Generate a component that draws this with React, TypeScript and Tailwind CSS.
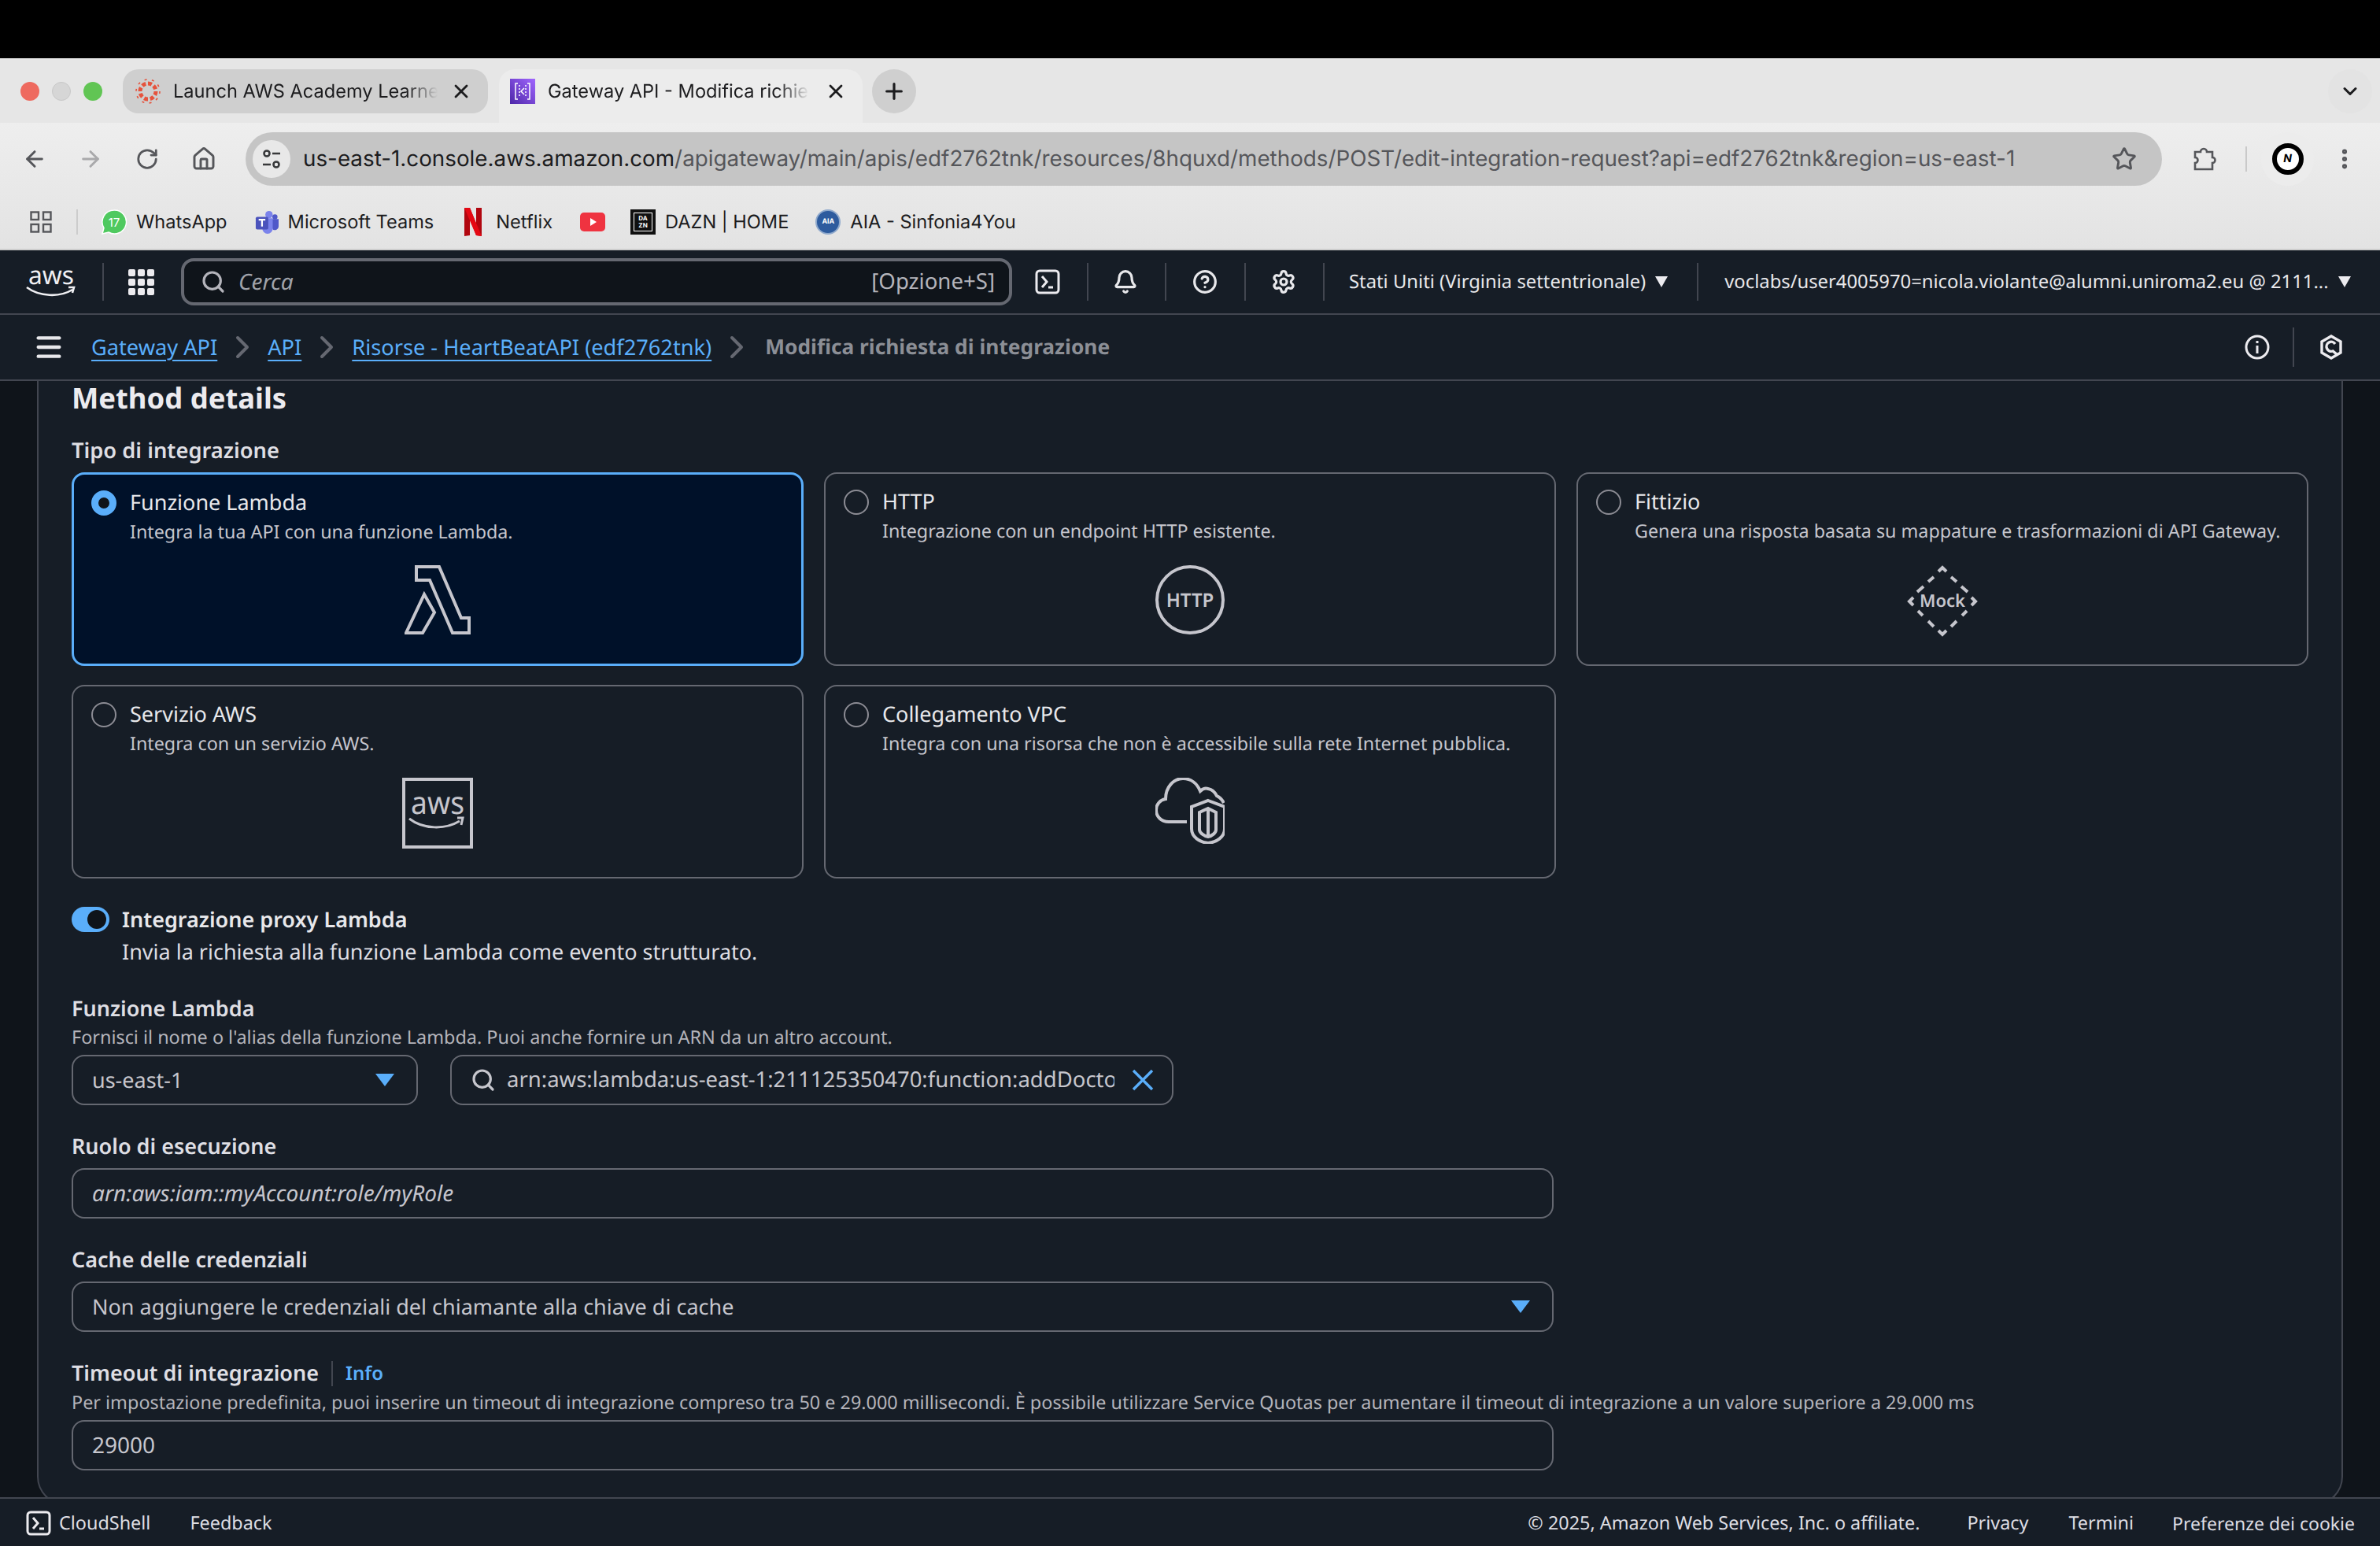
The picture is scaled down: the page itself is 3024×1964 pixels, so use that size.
import type { ReactNode } from "react";
import {
  ArrowLeft,
  ArrowRight,
  Bell,
  ChevronDown,
  ChevronRight,
  CircleHelp,
  EllipsisVertical,
  House,
  Menu,
  Plus,
  RotateCw,
  Search,
  Settings,
  Star,
  X,
} from "lucide-react";

function CanvasIcon() {
  return (
    <svg viewBox="0 0 32 32" className="w-8 h-8 shrink-0">
      <circle cx="16" cy="16" r="10" fill="none" stroke="#e5533d" strokeWidth="5" strokeDasharray="5 2.8" />
      <circle cx="16" cy="16" r="15" fill="none" stroke="#e5533d" strokeWidth="1.6" strokeDasharray="3 6.4" />
    </svg>
  );
}

function GatewayIcon() {
  return (
    <svg viewBox="0 0 32 32" className="w-8 h-8 shrink-0">
      <defs>
        <linearGradient id="gw" x1="0" y1="1" x2="1" y2="0">
          <stop offset="0" stopColor="#4d27a8" />
          <stop offset="1" stopColor="#a166ff" />
        </linearGradient>
      </defs>
      <rect width="32" height="32" fill="url(#gw)" />
      <path d="M10 6H7v20h3M22 6h3v20h-3M18 12l-4 4 4 4" fill="none" stroke="#fff" strokeWidth="1.5" />
      <path d="M12 8v16M20 8v16" stroke="#fff" strokeWidth="1.5" strokeDasharray="2 2" />
    </svg>
  );
}

function Bookmark({ icon, label }: { icon: ReactNode; label?: string }) {
  return (
    <div className="flex items-center gap-[12px] shrink-0">
      {icon}
      {label && <span className="text-[23.6px] text-[#1c1c1e]">{label}</span>}
    </div>
  );
}

function BrowserChrome() {
  return (
    <div className="shrink-0 [font-family:Inter,sans-serif]">
      {/* Tab strip */}
      <div className="h-[82px] bg-[#e6e6e6] flex items-start pt-[14px] pl-[26px] pr-[10px]">
        <div className="flex items-center gap-[16px] h-[56px] w-[130px] shrink-0">
          <div className="w-6 h-6 rounded-full bg-[#ee6a5f]" />
          <div className="w-6 h-6 rounded-full bg-[#d6d6d6] border border-[#c8c8c8]" />
          <div className="w-6 h-6 rounded-full bg-[#61c554]" />
        </div>
        <div className="h-[56px] w-[464px] rounded-[20px] bg-[#cfcfcf] flex items-center pl-4 pr-5 gap-4 shrink-0">
          <CanvasIcon />
          <span className="w-[336px] overflow-hidden whitespace-nowrap text-[23.6px] text-[#1c1c1e] [mask-image:linear-gradient(to_right,black_88%,transparent)]">
            Launch AWS Academy Learner Lab
          </span>
          <X className="w-[28px] h-[28px] text-[#1c1c1e] ml-auto" strokeWidth={2.4} />
        </div>
        <div className="h-[68px] w-[462px] ml-[14px] rounded-t-[20px] bg-[#ececec] flex items-center pl-[14px] pr-5 pb-3 gap-4 shrink-0">
          <GatewayIcon />
          <span className="w-[332px] overflow-hidden whitespace-nowrap text-[23.6px] text-[#1c1c1e] [mask-image:linear-gradient(to_right,black_88%,transparent)]">
            Gateway API - Modifica richiesta
          </span>
          <X className="w-[28px] h-[28px] text-[#1c1c1e] ml-auto" strokeWidth={2.4} />
        </div>
        <div className="w-14 h-14 ml-3 rounded-full bg-[#cfcfcf] flex items-center justify-center shrink-0">
          <Plus className="w-8 h-8 text-[#1c1c1e]" strokeWidth={2.4} />
        </div>
        <div className="w-14 h-14 ml-auto rounded-full bg-[#e3e3e3] flex items-center justify-center">
          <ChevronDown className="w-7 h-7 text-[#1c1c1e]" strokeWidth={2.6} />
        </div>
      </div>

      <div className="bg-gradient-to-b from-[#eeeeee] to-[#e3e3e3] border-b-2 border-[#cdcdcd]">
        {/* Toolbar */}
        <div className="h-[80px] pt-3 flex items-start">
          <div className="flex items-center h-[68px] pl-[28px] w-[312px] shrink-0">
            <ArrowLeft className="w-8 h-8 text-[#55565a]" strokeWidth={2.2} />
            <ArrowRight className="w-8 h-8 ml-[39px] text-[#a9a9ab]" strokeWidth={2.2} />
            <RotateCw className="w-[30px] h-[30px] ml-[41px] text-[#55565a]" strokeWidth={2.2} />
            <House className="w-8 h-8 ml-[41px] text-[#55565a]" strokeWidth={2.2} />
          </div>
          <div className="h-[68px] w-[2435px] rounded-full bg-[#c5c5c5] flex items-center pl-[9px] pr-[32px] shrink-0">
            <div className="w-[48px] h-[48px] rounded-full bg-[#e8e8e8] flex items-center justify-center shrink-0">
              <svg viewBox="0 0 28 28" className="w-7 h-7 text-[#38393b]" fill="none" stroke="currentColor" strokeWidth="2.6">
                <circle cx="8" cy="7" r="3.5" />
                <path d="M15 7h10M3 21h10" />
                <circle cx="20" cy="21" r="3.5" />
              </svg>
            </div>
            <div className="ml-4 text-[27.8px] whitespace-nowrap text-[#55565a]">
              <span className="text-[#1c1c1e]">us-east-1.console.aws.amazon.com</span>
              /apigateway/main/apis/edf2762tnk/resources/8hquxd/methods/POST/edit-integration-request?api=edf2762tnk&amp;region=us-east-1
            </div>
            <Star className="w-8 h-8 ml-auto text-[#55565a]" strokeWidth={2.2} />
          </div>
          <div className="flex items-center h-[68px] flex-1 pl-[37px]">
            <svg viewBox="0 0 32 32" className="w-8 h-8 text-[#55565a] shrink-0" fill="none" stroke="currentColor" strokeWidth="2.6">
              <path d="M5 7h7a4 4 0 0 1 8 0h7v7a3.500 3.500 0 0 1 0 7v8H5v-8a3.500 3.500 0 0 0 0-7z" />
            </svg>
            <div className="w-[2px] h-8 bg-[#c9c9c9] ml-[37px]" />
            <div className="w-[67px] h-[68px] ml-[18px] rounded-full bg-[#ececec] flex items-center justify-center shrink-0">
              <div className="w-10 h-10 rounded-full bg-white border-[6px] border-black flex items-center justify-center">
                <span className="text-[14px] font-bold italic text-black leading-none">N</span>
              </div>
            </div>
            <EllipsisVertical className="w-8 h-8 ml-[23px] text-[#55565a] shrink-0" strokeWidth={2.6} />
          </div>
        </div>

        {/* Bookmarks */}
        <div className="h-[80px] flex items-center pl-[38px] pt-[12px]">
          <svg viewBox="0 0 28 28" className="w-7 h-7 shrink-0 text-[#55565a]" fill="none" stroke="currentColor" strokeWidth="2.4">
            <rect x="1.5" y="1.5" width="9.5" height="9.5" />
            <rect x="17" y="1.5" width="9.5" height="9.5" />
            <rect x="1.5" y="17" width="9.5" height="9.5" />
            <rect x="17" y="17" width="9.5" height="9.5" />
          </svg>
          <div className="w-[2px] h-8 bg-[#cccccc] ml-[31px] mr-[30px]" />
          <Bookmark
            label="WhatsApp"
            icon={
              <svg viewBox="0 0 32 32" className="w-8 h-8">
                <path d="M16 1a15 15 0 0 0-13 22.500L1 31l8-2a15 15 0 1 0 7-28z" fill="#4fc95f" stroke="#fff" strokeWidth="1.500" />
                <text x="16" y="22" textAnchor="middle" fontSize="15" fill="#fff" fontFamily="Inter">17</text>
              </svg>
            }
          />
          <div className="ml-[35px]">
            <Bookmark
              label="Microsoft Teams"
              icon={
                <svg viewBox="0 0 32 32" className="w-[30px] h-8">
                  <circle cx="19" cy="6" r="5" fill="#7b83eb" />
                  <circle cx="27" cy="9" r="3.500" fill="#5059c9" />
                  <path d="M20 12h12v10a5 5 0 0 1-8 4z" fill="#5059c9" />
                  <path d="M9 11h15v14a7 7 0 0 1-14 0z" fill="#7b83eb" />
                  <rect x="1" y="9" width="17" height="17" rx="2" fill="#4b53bc" />
                  <path d="M5 13h9M9.500 13v9" stroke="#fff" strokeWidth="2.400" />
                </svg>
              }
            />
          </div>
          <div className="ml-[39px]">
            <Bookmark
              label="Netflix"
              icon={
                <svg viewBox="0 0 22 36" className="w-[22px] h-9 mr-[6px]">
                  <path d="M0 0h7l8 20V0h7v36l-7-1L7 15v20l-7 1z" fill="#b1060f" />
                  <path d="M0 0h7l15 36-7-1z" fill="#e50914" />
                </svg>
              }
            />
          </div>
          <div className="ml-[35px]">
            <Bookmark
              icon={
                <svg viewBox="0 0 32 24" className="w-8 h-6">
                  <rect width="32" height="24" rx="5" fill="#ef3340" />
                  <path d="M13 7l8 5-8 5z" fill="#fff" />
                </svg>
              }
            />
          </div>
          <div className="ml-[32px]">
            <Bookmark
              label="DAZN | HOME"
              icon={
                <div className="w-8 h-8 bg-[#101010] border-[3px] border-[#101010] outline outline-1 outline-white -outline-offset-[5px] flex flex-col items-center justify-center text-[8px] leading-[9px] font-bold text-white">
                  <span>DA</span>
                  <span>ZN</span>
                </div>
              }
            />
          </div>
          <div className="ml-[34px]">
            <Bookmark
              label="AIA - Sinfonia4You"
              icon={
                <div className="w-8 h-8 rounded-full bg-[#2d5b9e] border-2 border-[#8fa9cc] flex items-center justify-center text-[9px] font-bold text-white">
                  AIA
                </div>
              }
            />
          </div>
        </div>
      </div>
    </div>
  );
}

function NavDivider({ className = "" }: { className?: string }) {
  return <div className={`w-[2px] h-12 bg-[#424650] shrink-0 ${className}`} />;
}

function TopNav() {
  return (
    <div className="h-[82px] shrink-0 bg-[#161d26] border-b-2 border-[#424650] flex items-center text-[#e8e8eb]">
      <svg viewBox="0 0 64 40" className="w-16 h-10 ml-[33px] shrink-0">
        <text x="32" y="23" textAnchor="middle" fontSize="32" fill="#f0f0f3" fontFamily="Noto Sans" textLength="58" lengthAdjust="spacingAndGlyphs">
          aws
        </text>
        <path d="M1 27c16 12 42 13 58 3M54 27l7 0-2 7" fill="none" stroke="#f0f0f3" strokeWidth="2.600" />
      </svg>
      <NavDivider className="ml-[33px]" />
      <div className="grid grid-cols-3 gap-[3px] ml-[31px] shrink-0">
        {Array.from({ length: 9 }).map((_, i) => (
          <div key={i} className="w-[9px] h-[9px] rounded-[2px] bg-[#ecebef]" />
        ))}
      </div>
      <div className="ml-[34px] w-[1056px] h-[60px] rounded-[16px] border-[4px] border-[#656871] bg-[#0f141a] flex items-center pl-[21px] pr-[18px] shrink-0">
        <Search className="w-8 h-8 text-[#b4b4bb]" strokeWidth={2.4} />
        <span className="ml-[16px] text-[28px] italic text-[#a0a3aa]">Cerca</span>
        <span className="ml-auto text-[27.6px] text-[#b4b4bb]">[Opzione+S]</span>
      </div>
      <svg viewBox="0 0 32 32" className="w-8 h-8 ml-[29px] shrink-0" fill="none" stroke="#ecebef" strokeWidth="3">
        <rect x="2" y="2" width="28" height="28" rx="4" />
        <path d="M9 9l6 7-6 7M17 23h6" />
      </svg>
      <NavDivider className="ml-[34px]" />
      <Bell className="w-8 h-8 ml-[31px] shrink-0" strokeWidth={2.4} />
      <NavDivider className="ml-[34px]" />
      <CircleHelp className="w-8 h-8 ml-[33px] shrink-0" strokeWidth={2.4} />
      <NavDivider className="ml-[34px]" />
      <Settings className="w-8 h-8 ml-[32px] shrink-0" strokeWidth={2.4} />
      <NavDivider className="ml-[34px]" />
      <span className="ml-[31px] text-[23.8px] whitespace-nowrap shrink-0">Stati Uniti (Virginia settentrionale)</span>
      <span className="ml-[12px] w-0 h-0 border-x-[8px] border-x-transparent border-t-[14px] border-t-[#ecebef] shrink-0" />
      <NavDivider className="ml-[37px]" />
      <span className="ml-[33px] text-[23.8px] whitespace-nowrap shrink-0">
        voclabs/user4005970=nicola.violante@alumni.uniroma2.eu @ 2111...
      </span>
      <span className="ml-[12px] w-0 h-0 border-x-[8px] border-x-transparent border-t-[14px] border-t-[#ecebef] shrink-0" />
    </div>
  );
}

function Crumb({ children }: { children: ReactNode }) {
  return (
    <a className="text-[27.2px] text-[#5aaefa] underline decoration-2 underline-offset-[6px] whitespace-nowrap">
      {children}
    </a>
  );
}

function Breadcrumbs() {
  const sep = <ChevronRight className="w-12 h-12 -mx-[2px] text-[#656871] shrink-0" strokeWidth={2} />;
  return (
    <div className="h-[84px] shrink-0 bg-[#161d26] border-b-2 border-[#424650] flex items-center pl-[46px] text-[#e8e8eb]">
      <Menu className="w-8 h-8 shrink-0 scale-125" strokeWidth={2.6} />
      <div className="flex items-center gap-[10px] ml-[38px]">
        <Crumb>Gateway API</Crumb>
        {sep}
        <Crumb>API</Crumb>
        {sep}
        <Crumb>Risorse - HeartBeatAPI (edf2762tnk)</Crumb>
        {sep}
        <span className="ml-[4px] text-[26.3px] font-bold text-[#8c8f96] whitespace-nowrap">Modifica richiesta di integrazione</span>
      </div>
      <div className="ml-auto flex items-center">
        <svg viewBox="0 0 32 32" className="w-8 h-8" fill="none" stroke="#ecebef" strokeWidth="3">
          <circle cx="16" cy="16" r="14" />
          <path d="M16 14v10M16 8v3" />
        </svg>
        <div className="w-[2px] h-[50px] bg-[#424650] ml-[29px]" />
        <svg viewBox="0 0 32 32" className="w-8 h-8 ml-[31px] mr-[46px]" fill="none" stroke="#ecebef" strokeWidth="3.400">
          <path d="M16 2l12 7v14l-12 7-12-7V9z" />
          <path d="M21 12a6 6 0 1 0-3 9l5 4" />
        </svg>
      </div>
    </div>
  );
}

function LambdaIcon() {
  return (
    <svg viewBox="0 0 84 88" className="w-[84px] h-[88px]" fill="none" stroke="#c6c6cd" strokeWidth="4">
      <path d="M15 2h29l28 65h10v19H61L32 19H15z" />
      <path d="M25 37L2 86h21l15-26z" />
    </svg>
  );
}

function HttpIcon() {
  return (
    <svg viewBox="0 0 88 88" className="w-[88px] h-[88px]">
      <circle cx="44" cy="44" r="42" fill="none" stroke="#c6c6cd" strokeWidth="4" />
      <text x="44" y="53" textAnchor="middle" fontSize="24" fontWeight="600" fill="#c6c6cd" fontFamily="Noto Sans">
        HTTP
      </text>
    </svg>
  );
}

function MockIcon() {
  return (
    <svg viewBox="0 0 90 91" className="w-[90px] h-[91px]" fill="none" stroke="#c6c6cd" strokeWidth="4">
      <path d="M40 8l5-5 5 5M27 21l7-6M56 15l7 6M13 34l8-7M69 27l8 7M8 41l-5 5 5 5M82 41l5 5-5 5M14 58l6 6M76 58l-6 6M27 71l7 7M63 71l-7 7M40 83l5 5 5-5" />
      <text x="45" y="53" textAnchor="middle" fontSize="22" fontWeight="600" fill="#c6c6cd" stroke="none" fontFamily="Noto Sans">
        Mock
      </text>
    </svg>
  );
}

function AwsBoxIcon() {
  return (
    <svg viewBox="0 0 90 90" className="w-[90px] h-[90px]" fill="none" stroke="#c6c6cd">
      <rect x="2" y="2" width="86" height="86" strokeWidth="4" />
      <text x="45" y="46" textAnchor="middle" fontSize="40" fill="#c6c6cd" stroke="none" fontFamily="Noto Sans" textLength="68" lengthAdjust="spacingAndGlyphs">
        aws
      </text>
      <path d="M9 52c18 14 46 14 64 3M70 51l7 0-2 9" strokeWidth="3" />
    </svg>
  );
}

function VpcIcon() {
  return (
    <svg viewBox="0 0 88 84" className="w-[88px] h-[84px]" fill="none" stroke="#c6c6cd" strokeWidth="4">
      <path d="M40 56H17C7 56 1 49 1 41c0-7 5-13 12-14C13 12 23 1 35 1c10 0 18 6 22 16 3-3 7-4 10-3 6 1 9 5 11 9 4 2 7 5 9 9" />
      <path d="M67 29l21 8v28c0 10-10 17-21 18-11-1-21-8-21-18V37z" />
      <path d="M67 39l10 5v22c0 4-5 8-10 9-5-1-11-5-11-9V44zM67 39v36" />
    </svg>
  );
}

type CardProps = { title: string; desc: string; icon: ReactNode; selected?: boolean };

function IntegrationCard({ title, desc, icon, selected }: CardProps) {
  return (
    <div
      className={`h-[246px] rounded-[16px] pt-[20px] flex flex-col ${
        selected ? "pl-[22px] border-[3px] border-[#5aaefa] bg-[#001129]" : "pl-[23px] border-2 border-[#656871]"
      }`}
    >
      <div className="flex items-start gap-[17px]">
        {selected ? (
          <div className="w-8 h-8 rounded-full border-[9px] border-[#5aaefa] bg-[#0f141a] shrink-0" />
        ) : (
          <div className="w-8 h-8 rounded-full border-2 border-[#8c8c94] shrink-0" />
        )}
        <div className="min-w-0 -mt-[3px]">
          <div className="text-[27px] leading-[36px] text-[#e8e8eb]">{title}</div>
          <div className="mt-[1px] text-[23.3px] leading-[36px] text-[#c6c6cd] whitespace-nowrap">{desc}</div>
        </div>
      </div>
      <div className={`flex justify-center ${selected ? "mt-[25px] -ml-[22px]" : "mt-[26px] -ml-[23px]"}`}>{icon}</div>
    </div>
  );
}

function FieldLabel({ children }: { children: ReactNode }) {
  return <div className="text-[27px] leading-[34px] pb-[2px] font-semibold text-[#dedee3]">{children}</div>;
}

function Box({ children, className = "" }: { children: ReactNode; className?: string }) {
  return (
    <div className={`h-[64px] rounded-[16px] border-2 border-[#656871] flex items-center px-[24px] text-[27px] text-[#c6c6cd] ${className}`}>
      {children}
    </div>
  );
}

function Caret() {
  return <span className="ml-auto mr-[4px] w-0 h-0 border-x-[12px] border-x-transparent border-t-[16px] border-t-[#5aaefa] shrink-0" />;
}

function MethodForm() {
  return (
    <div className="flex-1 min-h-0 overflow-hidden bg-[#0f141a] px-[47px]">
      <div className="h-[1430px] bg-[#161d26] border-x-2 border-b-2 border-[#424650] rounded-b-[36px] pl-[42px] pr-[42px] [font-family:'Noto_Sans',sans-serif]">
        <h2 className="-mt-[2px] text-[36.4px] leading-[46px] font-bold text-[#ecebef]">Method details</h2>
        <div className="mt-[26px] text-[27.3px] leading-[36px] font-semibold text-[#dedee3]">Tipo di integrazione</div>

        <div className="mt-[10px] grid grid-cols-3 gap-x-[26px] gap-y-[24px]">
          <IntegrationCard selected title="Funzione Lambda" desc="Integra la tua API con una funzione Lambda." icon={<LambdaIcon />} />
          <IntegrationCard title="HTTP" desc="Integrazione con un endpoint HTTP esistente." icon={<HttpIcon />} />
          <IntegrationCard title="Fittizio" desc="Genera una risposta basata su mappature e trasformazioni di API Gateway." icon={<MockIcon />} />
          <IntegrationCard title="Servizio AWS" desc="Integra con un servizio AWS." icon={<AwsBoxIcon />} />
          <IntegrationCard title="Collegamento VPC" desc="Integra con una risorsa che non è accessibile sulla rete Internet pubblica." icon={<VpcIcon />} />
        </div>

        <div className="mt-[34px] flex items-start gap-[16px]">
          <div className="w-[48px] h-[32px] mt-[2px] rounded-full bg-[#5aaefa] flex items-center justify-end pr-[4px] shrink-0">
            <div className="w-[24px] h-[24px] rounded-full bg-[#0f141a]" />
          </div>
          <div>
            <div className="text-[27px] leading-[36px] font-semibold text-[#e8e8eb]">Integrazione proxy Lambda</div>
            <div className="mt-[5px] text-[27px] leading-[36px] text-[#dedee3]">Invia la richiesta alla funzione Lambda come evento strutturato.</div>
          </div>
        </div>

        <div className="mt-[37px]">
          <FieldLabel>Funzione Lambda</FieldLabel>
          <div className="text-[23.4px] leading-[34px] text-[#b4b4bb]">Fornisci il nome o l'alias della funzione Lambda. Puoi anche fornire un ARN da un altro account.</div>
          <div className="mt-[6px] flex gap-[41px]">
            <Box className="w-[440px] text-[26px]">
              us-east-1
              <Caret />
            </Box>
            <Box className="w-[919px] pl-[24px] pr-[22px]">
              <Search className="w-8 h-8 shrink-0" strokeWidth={2.4} />
              <span className="ml-[14px] whitespace-nowrap overflow-hidden w-[772px] text-[27.5px]">arn:aws:lambda:us-east-1:211125350470:function:addDoctor</span>
              <svg viewBox="0 0 30 30" className="w-[30px] h-[30px] ml-auto shrink-0" fill="none" stroke="#5aaefa" strokeWidth="3.400">
                <path d="M3 3l24 24M27 3L3 27" />
              </svg>
            </Box>
          </div>
        </div>

        <div className="mt-[35px]">
          <FieldLabel>Ruolo di esecuzione</FieldLabel>
          <Box className="mt-[9px] w-[1883px] text-[28px] italic text-[#a0a3aa]">arn:aws:iam::myAccount:role/myRole</Box>
        </div>

        <div className="mt-[35px]">
          <FieldLabel>Cache delle credenziali</FieldLabel>
          <Box className="mt-[9px] w-[1883px]">
            Non aggiungere le credenziali del chiamante alla chiave di cache
            <Caret />
          </Box>
        </div>

        <div className="mt-[35px]">
          <div className="flex items-center">
            <FieldLabel>Timeout di integrazione</FieldLabel>
            <div className="w-[2px] h-[32px] bg-[#424650] ml-[16px]" />
            <span className="ml-[16px] text-[24px] font-semibold text-[#5aaefa]">Info</span>
          </div>
          <div className="mt-[1px] text-[23.4px] leading-[34px] text-[#b4b4bb] whitespace-nowrap">
            Per impostazione predefinita, puoi inserire un timeout di integrazione compreso tra 50 e 29.000 millisecondi. È possibile utilizzare Service Quotas per aumentare il timeout di integrazione a un valore superiore a 29.000 ms
          </div>
          <Box className="mt-[6px] w-[1883px] text-[28px]">29000</Box>
        </div>
      </div>
    </div>
  );
}

function Footer() {
  return (
    <div className="h-[62px] shrink-0 bg-[#161d26] border-t-2 border-[#424650] flex items-center pt-[2px] pl-[33px] pr-[32px] text-[23.4px] text-[#dedee3] [font-family:'Noto_Sans',sans-serif]">
      <svg viewBox="0 0 32 32" className="w-8 h-8 shrink-0" fill="none" stroke="#ecebef" strokeWidth="3">
        <rect x="2" y="2" width="28" height="28" rx="4" />
        <path d="M9 9l6 7-6 7M17 23h6" />
      </svg>
      <span className="ml-[10px]">CloudShell</span>
      <span className="ml-[50px]">Feedback</span>
      <span className="ml-auto">© 2025, Amazon Web Services, Inc. o affiliate.</span>
      <span className="ml-[60px]">Privacy</span>
      <span className="ml-[51px]">Termini</span>
      <span className="ml-[49px] text-[23px]">Preferenze dei cookie</span>
    </div>
  );
}

export default function App() {
  return (
    <div className="w-[3024px] h-[1964px] flex flex-col overflow-hidden bg-[#0f141a] [text-rendering:geometricPrecision]">
      <div className="h-[74px] shrink-0 bg-black" />
      <BrowserChrome />
      <div className="flex flex-col shrink-0 [font-family:'Noto_Sans',sans-serif]">
        <TopNav />
        <Breadcrumbs />
      </div>
      <MethodForm />
      <Footer />
    </div>
  );
}
